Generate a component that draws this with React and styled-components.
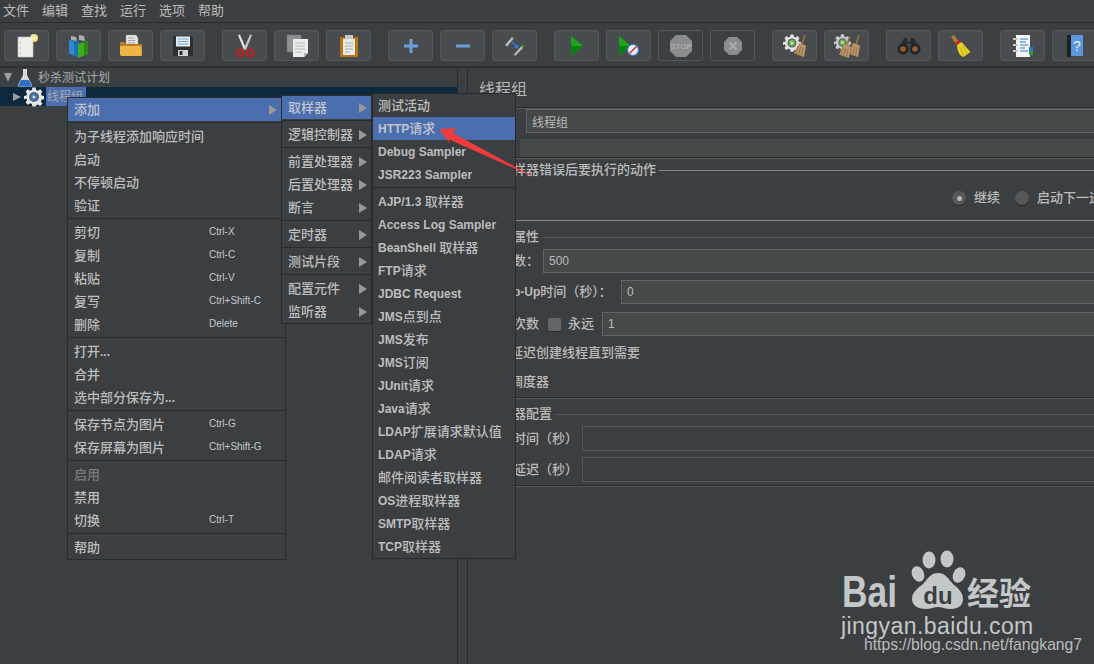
import React from "react";
import styled, { createGlobalStyle } from "styled-components";

const GlobalStyle = createGlobalStyle`
  html, body {
    margin: 0;
    padding: 0;
    width: 1094px;
    height: 664px;
    overflow: hidden;
    background: #3c3f41;
  }
  * { box-sizing: border-box; }
`;

const Page = styled.div`
  position: relative;
  width: 1094px;
  height: 664px;
  overflow: hidden;
  display: flex;
  flex-direction: column;
  background: #3c3f41;
  color: #bbbbbb;
  font-family: "Noto Sans CJK SC", "Liberation Sans", sans-serif;
  font-size: 13px;
  white-space: nowrap;
`;

const MenuBar = styled.div`
  height: 23px;
  flex: none;
  display: flex;
  align-items: center;
  gap: 13px;
  padding: 0 0 3px 3px;
  border-bottom: 1px solid #2b2b2b;
`;

const Toolbar = styled.div`
  height: 43px;
  flex: none;
  display: flex;
  gap: 17px;
  padding: 7px 0 0 4px;
`;

const ToolGroup = styled.div`
  display: flex;
  gap: 7px;
  flex: none;
`;

const ToolButton = styled.div`
  width: 45px;
  height: 31px;
  flex: none;
  display: flex;
  align-items: center;
  justify-content: center;
  border-radius: 3px;
  border: 1px solid #54585a;
  background: ${(p) => (p.$off ? "#3d4042" : "#484c4e")};
`;

const Main = styled.div`
  flex: 1;
  display: flex;
  border-top: 2px solid #2f3133;
`;

const TreePanel = styled.div`
  width: 458px;
  flex: none;
  border-right: 1px solid #2b2b2b;
`;

const TreeRow = styled.div`
  height: 19px;
  display: flex;
  align-items: center;
  background: ${(p) => (p.$selected ? "#0d293e" : "transparent")};
  padding-left: ${(p) => p.$indent}px;
  color: #a9abac;
  font-size: 12px;
`;

const TreeArrow = styled.span`
  width: 0;
  height: 0;
  flex: none;
  ${(p) =>
    p.$open
      ? `border-left: 4.5px solid transparent; border-right: 4.5px solid transparent; border-top: 9px solid #9a9c9e;`
      : `border-top: 4.5px solid transparent; border-bottom: 4.5px solid transparent; border-left: 8px solid #9a9c9e;`}
`;

const TreeIcon = styled.span`
  display: flex;
  flex: none;
  margin-left: ${(p) => p.$gap}px;
`;

const TreeLabel = styled.span`
  margin-left: ${(p) => p.$gap}px;
  padding: 0 3px 0 1px;
  height: 19px;
  line-height: 17px;
  background: ${(p) => (p.$selected ? "#4b6eaf" : "transparent")};
`;

const SplitGap = styled.div`
  width: 9px;
  flex: none;
`;

const RightPanel = styled.div`
  flex: 1;
  min-width: 0;
  overflow: hidden;
  display: flex;
  flex-direction: column;
  border-left: 1px solid #2b2b2b;
  font-weight: 500;
`;

const PanelTitle = styled.div`
  height: 39px;
  flex: none;
  display: flex;
  align-items: center;
  padding-left: 11px;
  font-size: 16px;
  font-weight: 400;
  color: #b5b7b8;
`;

const Rule = styled.div`
  flex: none;
  height: ${(p) => (p.$light ? 1 : 2)}px;
  margin-top: ${(p) => p.$top || 0}px;
  ${(p) =>
    p.$light
      ? `background: #85888a;`
      : `border-top: 1px solid #2b2b2b; border-bottom: 1px solid #55585a;`}
`;

const Row = styled.div`
  flex: none;
  display: flex;
  align-items: center;
  height: ${(p) => p.$h || 24}px;
  margin-top: ${(p) => p.$top || 0}px;
  padding-left: ${(p) => p.$left ?? 19}px;
`;

const Caption = styled.span`
  flex: none;
  padding-bottom: 3px;
`;

const FieldLabel = styled(Caption)`
  width: ${(p) => p.$w}px;
`;

const Field = styled.input`
  flex: 1;
  min-width: 0;
  height: 100%;
  padding: 0 0 0 5px;
  border: 1px solid ${(p) => (p.$faint ? "#55585a" : "#646464")};
  outline: none;
  border-right: none;
  background: ${(p) => (p.$faint ? "#3c3f41" : "#45494a")};
  color: #bbbbbb;
  font-family: "Liberation Sans", "Noto Sans CJK SC", sans-serif;
  font-size: 12px;
`;

const CommentBox = styled.div`
  flex: 1;
  height: 100%;
  background: #45494a;
`;

const Legend = styled.div`
  flex: none;
  display: flex;
  align-items: center;
  gap: 3px;
  height: 20px;
  margin-top: ${(p) => p.$top || 0}px;
  padding-left: 19px;
  &::after {
    content: "";
    flex: 1;
    height: 1px;
    background: ${(p) => (p.$light ? "#85888a" : "#55585a")};
  }
`;

const Radio = styled.span`
  width: 14px;
  height: 14px;
  flex: none;
  display: flex;
  align-items: center;
  justify-content: center;
  border-radius: 50%;
  background: #54585a;
  box-shadow: 0 1px 0 #2b2b2b;
  margin-left: ${(p) => p.$gap || 0}px;
  margin-right: 8px;
  &::after {
    content: "";
    width: 5px;
    height: 5px;
    border-radius: 50%;
    background: ${(p) => (p.$on ? "#b5b7b8" : "transparent")};
  }
`;

const CheckBox = styled.span`
  width: 13px;
  height: 13px;
  flex: none;
  margin-right: ${(p) => p.$gap}px;
  border-radius: 2px;
  background: #62666a;
  box-shadow: 0 1px 0 #2b2b2b;
`;

const PopupMenu = styled.div`
  position: absolute;
  left: ${(p) => p.$x}px;
  top: ${(p) => p.$y}px;
  width: ${(p) => p.$w}px;
  z-index: ${(p) => p.$z};
  background: #3c3f41;
  border: 1px solid #2b2b2b;
  font-weight: 500;
  color: #bbbdbe;
`;

const MenuRow = styled.div`
  height: 23px;
  display: flex;
  align-items: center;
  padding: 0 ${(p) => p.$pad}px 3px ${(p) => p.$lead}px;
  background: ${(p) => (p.$active ? "#4b6eaf" : "transparent")};
  color: ${(p) => (p.$off ? "#77797b" : p.$active ? "#c0c4cc" : "inherit")};
`;

const MenuLabel = styled.span`
  flex: ${(p) => (p.$fixed ? "0 0 135px" : "0 1 auto")};
`;

const Latin = styled.span`
  font-family: "Liberation Sans", sans-serif;
  font-size: 12px;
  font-weight: 700;
`;

const Shortcut = styled.span`
  font-family: "Liberation Sans", sans-serif;
  font-size: 10px;
  font-weight: 400;
  color: #c6c8ca;
`;

const SubArrow = styled.span`
  margin-left: auto;
  margin-top: 3px;
  width: 0;
  height: 0;
  border-top: 5px solid transparent;
  border-bottom: 5px solid transparent;
  border-left: 8px solid #97999b;
`;

const MenuSeparator = styled.div`
  height: 4px;
  padding-top: 1px;
  &::after {
    content: "";
    display: block;
    height: 1px;
    background: #2b2b2b;
  }
`;

const ArrowOverlay = styled.svg`
  position: absolute;
  left: 430px;
  top: 120px;
  z-index: 5;
`;

const Watermark = styled.div`
  position: absolute;
  left: 838px;
  top: 545px;
  z-index: 6;
  width: 250px;
`;

const WatermarkSite = styled.div`
  position: absolute;
  left: 3px;
  top: 66px;
  font-family: "Liberation Sans", sans-serif;
  font-size: 23px;
  letter-spacing: 0.43px;
  line-height: 30px;
  color: #c4c7c7;
`;

const WatermarkUrl = styled.div`
  position: absolute;
  left: 26px;
  top: 90px;
  font-family: "Liberation Sans", sans-serif;
  font-size: 15.7px;
  line-height: 20px;
  color: #b9bcbc;
`;

const mixed = (text) =>
  text
    .split(/([\x00-\x7f]+)/)
    .filter(Boolean)
    .map((part, i) =>
      /^[\x00-\x7f]/.test(part) ? <Latin key={i}>{part}</Latin> : <span key={i}>{part}</span>
    );

const Gear = ({ size = 20, fill = "#e4e6e8", core = "#3f77b5" }) => (
  <svg width={size} height={size} viewBox="0 0 24 24">
    <path
      fill={fill}
      d="M10 1h4l.6 3.2 2 .8 2.7-1.8 2.8 2.8L20.3 8.7l.8 2 2.9.6v4l-2.9.6-.8 2 1.8 2.7-2.8 2.8-2.7-1.8-2 .8L14 24h-4l-.6-3.1-2-.8-2.7 1.8-2.8-2.8 1.8-2.7-.8-2L0 15.300v-4l2.900-.6.8-2L1.900 6l2.800-2.800L7.400 5l2-.8z"
      transform="translate(0 -.5)"
    />
    <circle cx="12" cy="12" r="6" fill="#5d6468" />
    <circle cx="12" cy="12" r="4.2" fill={core} />
    <path d="M10.500 9.800l4 2.200-4 2.200z" fill="#dfe9f3" />
  </svg>
);

const Flask = () => (
  <svg width="16" height="18" viewBox="0 0 16 18">
    <path d="M6 0h4v6l5 10q.5 2-1.500 2h-11Q.5 18 1 16L6 6z" fill="#d7dadd" />
    <path d="M4 11h8l2.600 5.500q.1 1.300-1.300 1.300H2.700q-1.400 0-1.300-1.300z" fill="#2f6fc0" />
  </svg>
);

const Broom = ({ x, y }) => (
  <g transform={`translate(${x} ${y})`}>
    <path d="M9 0l1.500.7-2.700 9-1.500-.6z" fill="#9a7045" />
    <path d="M4 8l6 2 1 1-2 11-10-3.500z" fill="#b99468" />
    <path d="M3 11l-2 8M5.500 12l-2 8.500M8 12.500l-1.500 8.500" stroke="#8a6a45" strokeWidth=".8" />
  </g>
);

const icons = {
  newFile: (
    <svg width="24" height="26" viewBox="0 0 24 26">
      <circle cx="19" cy="5" r="4" fill="#f5e27a" />
      <path d="M3 4h15v20H3z" fill="#eeeeea" stroke="#c9c9c4" strokeWidth=".6" />
      <path d="M5 10h1M5 15h1M5 20h1" stroke="#999" />
      <circle cx="19" cy="5" r="2" fill="#fff6b8" />
    </svg>
  ),
  templates: (
    <svg width="26" height="26" viewBox="0 0 26 26">
      <path d="M5 3l5 1 1 4-6-1zM13 2l5 1 1 5-6-1z" fill="#a9b0b5" />
      <path d="M3 7l5 1v15l-5-3z" fill="#2d8ad0" />
      <path d="M8 8l5 .5v16L8 23z" fill="#1e6fb0" />
      <path d="M12 11l10-3v13l-10 4z" fill="#3eae21" />
      <path d="M18 9l4-1v13l-4 1.500z" fill="#2a8a15" />
    </svg>
  ),
  open: (
    <svg width="24" height="24" viewBox="0 0 24 24">
      <path d="M7 1h10l2 3v10H7z" fill="#e6e6e6" stroke="#9a9a9a" strokeWidth=".5" />
      <path d="M9 4h7M9 6.500h7M9 9h7" stroke="#8a8a8a" strokeWidth=".7" />
      <path d="M1 8h4l2 2h16v12H2z" fill="#b9801c" />
      <path d="M1 12h21l1 8q0 2-2 2H3q-2 0-2-2z" fill="#eeb544" />
    </svg>
  ),
  save: (
    <svg width="22" height="22" viewBox="0 0 22 22">
      <path d="M1 1h18l2 2v18H1z" fill="#2d2e30" />
      <path d="M4 1.500h14v10H4z" fill="#e9eef2" />
      <path d="M5.500 4h11M5.500 6.500h11M5.500 9h11" stroke="#6aa0d0" strokeWidth=".9" />
      <path d="M6 15h10v6H6z" fill="#cfd2d4" />
      <path d="M7.500 16h3v4h-3z" fill="#2d2e30" />
    </svg>
  ),
  cut: (
    <svg width="22" height="24" viewBox="0 0 22 24">
      <path d="M4 1l2-.5 6 14-2 1.500z" fill="#e4e6e8" />
      <path d="M18 1l-2-.5-6 14 2 1.500z" fill="#c4c6c8" />
      <circle cx="6" cy="19" r="3.400" fill="none" stroke="#c81e1e" strokeWidth="2" />
      <circle cx="16" cy="19" r="3.400" fill="none" stroke="#c81e1e" strokeWidth="2" />
    </svg>
  ),
  copy: (
    <svg width="24" height="24" viewBox="0 0 24 24">
      <path d="M2 1h14v17H2z" fill="#8e9193" stroke="#6e7072" strokeWidth=".5" />
      <path d="M8 5h15v14l-4 4H8z" fill="#eceded" />
      <path d="M10 9h10M10 12h10M10 15h10M10 18h7" stroke="#a8a8a8" strokeWidth=".8" />
      <path d="M23 19h-4v4z" fill="#b9b9b9" />
    </svg>
  ),
  paste: (
    <svg width="20" height="24" viewBox="0 0 20 24">
      <path d="M1 3h18v20H1z" fill="#b87518" />
      <path d="M6 1h8v4H6z" fill="#c8c8c8" />
      <path d="M4 5h12v16H4z" fill="#e9e9e6" />
      <path d="M6 9h8M6 12h8M6 15h8M6 18h5" stroke="#9a9a9a" strokeWidth=".8" />
    </svg>
  ),
  plus: (
    <svg width="16" height="16" viewBox="0 0 16 16">
      <path d="M6.500 1h3v5.500H15v3H9.500V15h-3V9.500H1v-3h5.500z" fill="#6a9fd8" />
    </svg>
  ),
  minus: (
    <svg width="16" height="16" viewBox="0 0 16 16">
      <path d="M1 6.500h14v3H1z" fill="#6a9fd8" />
    </svg>
  ),
  toggle: (
    <svg width="22" height="22" viewBox="0 0 22 22">
      <path d="M1 10l7-8 2 1.500-7 8z" fill="#b9bec2" />
      <path d="M7 2.500l1-1 2 1.500-1 1z" fill="#4caf3a" />
      <path d="M11 21l8-8-2-1.500-7 8z" fill="#b9bec2" />
      <path d="M17 11l2-1 1 2-1 1z" fill="#4caf3a" />
      <path d="M8 7l5 5" stroke="#2f7ad8" strokeWidth="1.400" />
      <path d="M14.500 13.500l-5-.5 4.500-4z" fill="#2f7ad8" />
    </svg>
  ),
  start: (
    <svg width="14" height="22" viewBox="0 0 14 22">
      <path d="M1 1l12 10L1 21z" fill="#17a81c" />
      <path d="M1 11h12L1 21z" fill="#0b7f10" />
    </svg>
  ),
  startNoTimers: (
    <svg width="22" height="22" viewBox="0 0 22 22">
      <path d="M1 1l12 10L1 21z" fill="#17a81c" />
      <path d="M1 11h12L1 21z" fill="#0b7f10" />
      <circle cx="15" cy="15" r="5.500" fill="#e8eef5" stroke="#3b78c4" strokeWidth="1.200" />
      <path d="M11.500 18.500l7-7" stroke="#d03030" strokeWidth="1.400" />
    </svg>
  ),
  stop: (
    <svg width="24" height="24" viewBox="0 0 24 24">
      <path d="M7 1h10l6 6v10l-6 6H7l-6-6V7z" fill="#8a8c8e" />
      <text x="12" y="15" textAnchor="middle" fontSize="8" fontWeight="700" fontFamily="Liberation Sans" fill="#a9abad">STOP</text>
    </svg>
  ),
  shutdown: (
    <svg width="20" height="20" viewBox="0 0 20 20">
      <path d="M6 1h8l5 5v8l-5 5H6l-5-5V6z" fill="#8a8c8e" />
      <path d="M6.500 6.500l7 7M13.500 6.500l-7 7" stroke="#a8aaac" strokeWidth="2.200" />
    </svg>
  ),
  clear: (
    <svg width="24" height="26" viewBox="0 0 24 26">
      <g transform="translate(0 1)"><Gear size={18} fill="#dfe1e3" core="#6cb33f" /></g>
      <Broom x={12} y={2} />
    </svg>
  ),
  clearAll: (
    <svg width="26" height="26" viewBox="0 0 26 26">
      <g transform="translate(0 1)"><Gear size={17} fill="#c8cacc" core="#6cb33f" /></g>
      <Broom x={6} y={3} />
      <Broom x={15} y={2} />
    </svg>
  ),
  search: (
    <svg width="24" height="18" viewBox="0 0 24 18">
      <path d="M7 1h3l1 4h2l1-4h3l5 10-6 1-2-5h-4l-2 5-6-1z" fill="#2a2b2d" />
      <circle cx="6" cy="12" r="5.500" fill="#232426" />
      <circle cx="18" cy="12" r="5.500" fill="#232426" />
      <circle cx="6" cy="12" r="2.800" fill="#9a5c2a" />
      <circle cx="18" cy="12" r="2.800" fill="#9a5c2a" />
    </svg>
  ),
  broom: (
    <svg width="22" height="24" viewBox="0 0 22 24">
      <path d="M1 3l3-2 5 7-3 2z" fill="#b07a35" />
      <path d="M5 9l4.500-3 2 2-4.500 3z" fill="#c81e1e" />
      <path d="M7 11l4.500-3 9 10-7 5q-2 0-4-3-2.500-4-2.500-9z" fill="#e8d12a" />
      <path d="M10 13l4 9M13 11l4 9" stroke="#b9a315" strokeWidth=".7" />
    </svg>
  ),
  functions: (
    <svg width="22" height="24" viewBox="0 0 22 24">
      <path d="M4 1h14v22H4z" fill="#f4f4f4" />
      <path d="M1 5h5M1 11h5M1 17h5" stroke="#c9c9c9" strokeWidth="2" />
      <path d="M8 5h8M8 8h6M8 11h8M8 14h5M8 17h8" stroke="#2f7ad8" strokeWidth="1.200" />
      <path d="M17 13h4v4h-4z" fill="#2f7ad8" />
      <path d="M17 17h4v4h-4z" fill="#3a9a2a" />
    </svg>
  ),
  help: (
    <svg width="18" height="24" viewBox="0 0 18 24">
      <path d="M1 1h4v22H1z" fill="#1f2022" />
      <path d="M5 1h12v21H5z" fill="#5b97de" />
      <text x="11" y="17" textAnchor="middle" fontSize="14" fontFamily="Liberation Sans" fill="#e6eef8">?</text>
    </svg>
  ),
};

const toolGroups = [
  [["newFile"], ["templates"], ["open"], ["save"]],
  [["cut"], ["copy"], ["paste"]],
  [["plus"], ["minus"], ["toggle"]],
  [["start"], ["startNoTimers"], ["stop", true], ["shutdown", true]],
  [["clear"], ["clearAll"]],
  [["search"], ["broom"]],
  [["functions"], ["help"]],
];

const mainMenu = [
  { label: "添加", sub: true, active: true },
  null,
  { label: "为子线程添加响应时间" },
  { label: "启动" },
  { label: "不停顿启动" },
  { label: "验证" },
  null,
  { label: "剪切", key: "Ctrl-X" },
  { label: "复制", key: "Ctrl-C" },
  { label: "粘贴", key: "Ctrl-V" },
  { label: "复写", key: "Ctrl+Shift-C" },
  { label: "删除", key: "Delete" },
  null,
  { label: "打开..." },
  { label: "合并" },
  { label: "选中部分保存为..." },
  null,
  { label: "保存节点为图片", key: "Ctrl-G" },
  { label: "保存屏幕为图片", key: "Ctrl+Shift-G" },
  null,
  { label: "启用", off: true },
  { label: "禁用" },
  { label: "切换", key: "Ctrl-T" },
  null,
  { label: "帮助" },
];

const addMenu = [
  { label: "取样器", sub: true, active: true },
  null,
  { label: "逻辑控制器", sub: true },
  null,
  { label: "前置处理器", sub: true },
  { label: "后置处理器", sub: true },
  { label: "断言", sub: true },
  null,
  { label: "定时器", sub: true },
  null,
  { label: "测试片段", sub: true },
  null,
  { label: "配置元件", sub: true },
  { label: "监听器", sub: true },
];

const samplerMenu = [
  { label: "测试活动" },
  { label: "HTTP请求", active: true },
  { label: "Debug Sampler" },
  { label: "JSR223 Sampler" },
  null,
  { label: "AJP/1.3 取样器" },
  { label: "Access Log Sampler" },
  { label: "BeanShell 取样器" },
  { label: "FTP请求" },
  { label: "JDBC Request" },
  { label: "JMS点到点" },
  { label: "JMS发布" },
  { label: "JMS订阅" },
  { label: "JUnit请求" },
  { label: "Java请求" },
  { label: "LDAP扩展请求默认值" },
  { label: "LDAP请求" },
  { label: "邮件阅读者取样器" },
  { label: "OS进程取样器" },
  { label: "SMTP取样器" },
  { label: "TCP取样器" },
];

const Menu = ({ items, x, y, w, z, pad, lead, fixed }) => (
  <PopupMenu $x={x} $y={y} $w={w} $z={z}>
    {items.map((item, i) =>
      item ? (
        <MenuRow key={i} $active={item.active} $off={item.off} $pad={pad} $lead={lead}>
          <MenuLabel $fixed={fixed}>{mixed(item.label)}</MenuLabel>
          {item.key && <Shortcut>{item.key}</Shortcut>}
          {item.sub && <SubArrow />}
        </MenuRow>
      ) : (
        <MenuSeparator key={i} />
      )
    )}
  </PopupMenu>
);

const BaiduMark = () => (
  <Watermark>
    <svg width="250" height="68" viewBox="0 0 250 68">
      <text x="4" y="62" textLength="55" lengthAdjust="spacingAndGlyphs" fontFamily="Liberation Sans" fontWeight="700" fontSize="44" fill="#c4c7c7">Bai</text>
      <g fill="#c4c7c7" transform="translate(3 0)">
        <ellipse cx="88" cy="15" rx="6.500" ry="8.500" />
        <ellipse cx="106" cy="14" rx="6.500" ry="8.500" />
        <ellipse cx="77" cy="29" rx="6" ry="8" transform="rotate(-25 77 29)" />
        <ellipse cx="118" cy="30" rx="6" ry="8" transform="rotate(25 118 30)" />
        <path d="M97 28c8 0 10 6 15 11 6 5 10 9 10 15 0 8-7 10-13 10-5 0-8-2-12-2s-7 2-12 2c-7 0-14-3-14-10 0-7 6-11 11-15 5-5 7-11 15-11z" />
      </g>
      <text x="100" y="59" textAnchor="middle" fontFamily="Liberation Sans" fontWeight="700" fontSize="24" fill="#3c3f41">du</text>
      <text x="129" y="60" fontFamily="Noto Sans CJK SC" fontWeight="700" fontSize="32" fill="#c4c7c7">经验</text>
    </svg>
    <WatermarkSite>jingyan.baidu.com</WatermarkSite>
    <WatermarkUrl>https://blog.csdn.net/fangkang7</WatermarkUrl>
  </Watermark>
);

const App = () => {
  return (
    <Page>
      <GlobalStyle />
      <MenuBar>
        {["文件", "编辑", "查找", "运行", "选项", "帮助"].map((m) => (
          <span key={m}>{m}</span>
        ))}
      </MenuBar>
      <Toolbar>
        {toolGroups.map((group, i) => (
          <ToolGroup key={i}>
            {group.map(([name, off]) => (
              <ToolButton key={name} $off={off}>
                {icons[name]}
              </ToolButton>
            ))}
          </ToolGroup>
        ))}
      </Toolbar>
      <Main>
        <TreePanel>
          <TreeRow $indent={4}>
            <TreeArrow $open />
            <TreeIcon $gap={5}>
              <Flask />
            </TreeIcon>
            <TreeLabel $gap={4}>秒杀测试计划</TreeLabel>
          </TreeRow>
          <TreeRow $selected $indent={13}>
            <TreeArrow />
            <TreeIcon $gap={3}>
              <Gear />
            </TreeIcon>
            <TreeLabel $selected $gap={2}>线程组</TreeLabel>
          </TreeRow>
        </TreePanel>
        <SplitGap />
        <RightPanel>
          <PanelTitle>线程组</PanelTitle>
          <Rule />
          <Row $left={11}>
            <FieldLabel $w={47}>名称：</FieldLabel>
            <Field readOnly value="线程组" />
          </Row>
          <Row $left={11} $h={18} $top={6}>
            <FieldLabel $w={41}>注释：</FieldLabel>
            <CommentBox />
          </Row>
          <Rule />
          <Legend $light $top={1}>
            <Caption>在取样器错误后要执行的动作</Caption>
          </Legend>
          <Row $h={20} $top={8} $left={484}>
            <Radio $on />
            <Caption>继续</Caption>
            <Radio $gap={15} />
            <Caption>启动下一进程循环</Caption>
            <Radio $gap={15} />
            <Caption>停止线程</Caption>
          </Row>
          <Rule $light $top={12} />
          <Legend $top={6}>
            <Caption>线程属性</Caption>
          </Legend>
          <Row $top={2}>
            <FieldLabel $w={56}>线程数：</FieldLabel>
            <Field readOnly value="500" />
          </Row>
          <Row $top={7}>
            <FieldLabel $w={134}>
              <Latin>Ramp-Up</Latin>时间（秒）：
            </FieldLabel>
            <Field readOnly value="0" />
          </Row>
          <Row $top={8}>
            <FieldLabel $w={61}>循环次数</FieldLabel>
            <CheckBox $gap={7} />
            <FieldLabel $w={34}>永远</FieldLabel>
            <Field readOnly value="1" />
          </Row>
          <Row $h={20} $top={7}>
            <CheckBox $gap={10} />
            <Caption>延迟创建线程直到需要</Caption>
          </Row>
          <Row $h={20} $top={9}>
            <CheckBox $gap={10} />
            <Caption>调度器</Caption>
          </Row>
          <Rule $top={5} />
          <Legend $top={5}>
            <Caption>调度器配置</Caption>
          </Legend>
          <Row $h={25} $top={2}>
            <FieldLabel $w={95}>持续时间（秒）</FieldLabel>
            <Field $faint readOnly />
          </Row>
          <Row $h={25} $top={6}>
            <FieldLabel $w={95}>启动延迟（秒）</FieldLabel>
            <Field $faint readOnly />
          </Row>
          <Rule $top={3} />
        </RightPanel>
      </Main>
      <Menu items={mainMenu} x={67} y={97} w={219} z={2} pad={8} lead={6} fixed />
      <Menu items={addMenu} x={281} y={95} w={91} z={3} pad={4} lead={6} />
      <Menu items={samplerMenu} x={372} y={93} w={144} z={4} pad={4} lead={5} />
      <ArrowOverlay width="110" height="62" viewBox="0 0 110 62">
        <path d="M9 9l17-1-3 5 83 45-88-39 2 5z" fill="#ee3b3b" />
      </ArrowOverlay>
      <BaiduMark />
    </Page>
  );
};

export default App;
